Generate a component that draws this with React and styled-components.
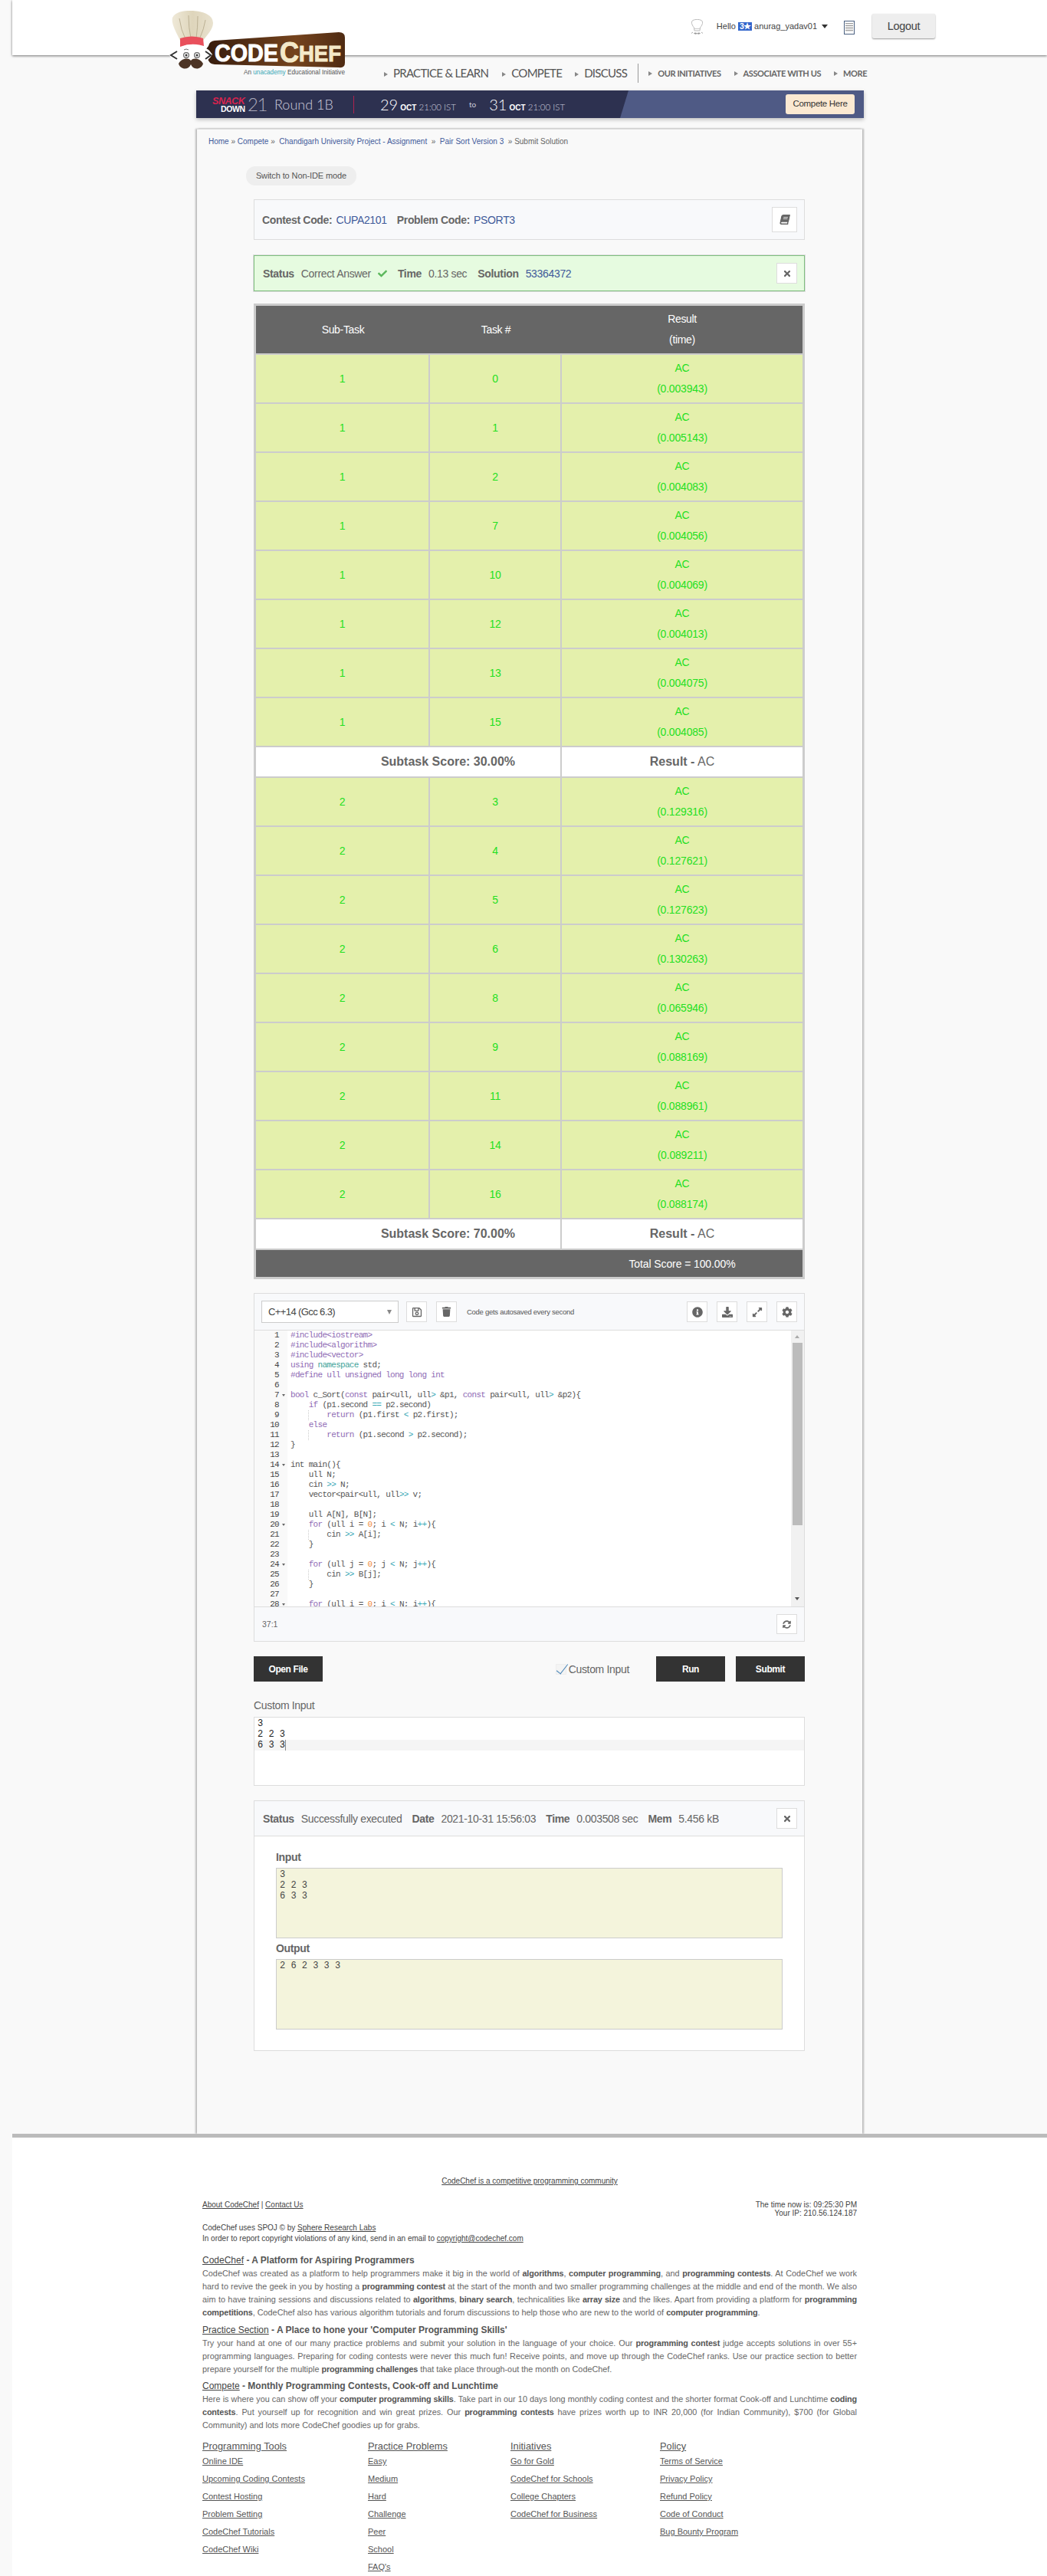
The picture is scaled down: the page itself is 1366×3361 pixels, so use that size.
import React from "react";
import styled, { createGlobalStyle } from "styled-components";
import {
  FaBook,
  FaCheck,
  FaCog,
  FaDownload,
  FaExpandAlt,
  FaInfoCircle,
  FaRegSave,
  FaSyncAlt,
  FaTimes,
  FaTrash,
} from "react-icons/fa";

const firstTasks = [
  ["0", "0.003943"],
  ["1", "0.005143"],
  ["2", "0.004083"],
  ["7", "0.004056"],
  ["10", "0.004069"],
  ["12", "0.004013"],
  ["13", "0.004075"],
  ["15", "0.004085"],
];

const secondTasks = [
  ["3", "0.129316"],
  ["4", "0.127621"],
  ["5", "0.127623"],
  ["6", "0.130263"],
  ["8", "0.065946"],
  ["9", "0.088169"],
  ["11", "0.088961"],
  ["14", "0.089211"],
  ["16", "0.088174"],
];

const codeLines = [
  "#include<iostream>",
  "#include<algorithm>",
  "#include<vector>",
  "using namespace std;",
  "#define ull unsigned long long int",
  "",
  "bool c_Sort(const pair<ull, ull> &p1, const pair<ull, ull> &p2){",
  "    if (p1.second == p2.second)",
  "        return (p1.first < p2.first);",
  "    else",
  "        return (p1.second > p2.second);",
  "}",
  "",
  "int main(){",
  "    ull N;",
  "    cin >> N;",
  "    vector<pair<ull, ull>> v;",
  "",
  "    ull A[N], B[N];",
  "    for (ull i = 0; i < N; i++){",
  "        cin >> A[i];",
  "    }",
  "",
  "    for (ull j = 0; j < N; j++){",
  "        cin >> B[j];",
  "    }",
  "",
  "    for (ull i = 0; i < N; i++){",
];

const foldLines = [7, 14, 20, 24, 28];
const guideLines = [9, 11, 21, 25];

const footerColumns = [
  {
    title: "Programming Tools",
    width: 216,
    links: ["Online IDE", "Upcoming Coding Contests", "Contest Hosting", "Problem Setting", "CodeChef Tutorials", "CodeChef Wiki"],
  },
  {
    title: "Practice Problems",
    width: 186,
    links: ["Easy", "Medium", "Hard", "Challenge", "Peer", "School", "FAQ's"],
  },
  {
    title: "Initiatives",
    width: 195,
    links: ["Go for Gold", "CodeChef for Schools", "College Chapters", "CodeChef for Business"],
  },
  {
    title: "Policy",
    width: 200,
    links: ["Terms of Service", "Privacy Policy", "Refund Policy", "Code of Conduct", "Bug Bounty Program"],
  },
];

// small regex colouring, the same idea as the editor's C++ mode
const tokenPattern = /(#include.*|#define.*|\b(?:using|bool|const|if|else|return|for)\b|\bnamespace\b|\b0\b|==|>>|<(?= )|>(?= )|\+\+)/g;

const tokenColor = (token) => {
  if (token.startsWith("#")) return "#8f6bb5";
  if (token === "namespace") return "#3fa39a";
  if (token === "0") return "#f08a3c";
  if (/^(==|>>|<|>|\+\+)$/.test(token)) return "#35a7b5";
  if (/^[a-z]+$/.test(token)) return "#8f6bb5";
  return "#555";
};

const renderCode = (line) =>
  line.split(tokenPattern).map((part, i) =>
    i % 2 === 1 ? (
      <Token key={i} $color={tokenColor(part)}>
        {part}
      </Token>
    ) : (
      part
    )
  );

export default function App() {
  return (
    <Page>
      <GlobalStyle />
      <TopBar>
        <ChefAvatar />
        <Greeting>
          Hello <StarBadge>3★</StarBadge> anurag_yadav01
        </Greeting>
        <Caret />
        <DocIcon />
        <LogoutButton>Logout</LogoutButton>
      </TopBar>
      <LogoBlock>
        <Logo />
        <Tagline>
          An <Una>unacademy</Una> Educational Initiative
        </Tagline>
      </LogoBlock>

      <NavRow>
        <MainLink $gap={18}>PRACTICE &amp; LEARN</MainLink>
        <MainLink $gap={17}>COMPETE</MainLink>
        <MainLink $gap={14}>DISCUSS</MainLink>
        <NavDivider />
        <SubLink $gap={17}>OUR INITIATIVES</SubLink>
        <SubLink $gap={17}>ASSOCIATE WITH US</SubLink>
        <SubLink $gap={0}>MORE</SubLink>
      </NavRow>

      <ContestBanner>
        <Slant />
        <SnackLogo>
          <SnackWord>SNACK</SnackWord>
          <DownWord>DOWN</DownWord>
          <YearWord>21</YearWord>
        </SnackLogo>
        <RoundName>Round 1B</RoundName>
        <BannerRule />
        <BannerDate>
          <Big>29</Big> <Month>OCT</Month> 21:00 IST
        </BannerDate>
        <BannerTo>to</BannerTo>
        <BannerDate>
          <Big>31</Big> <Month>OCT</Month> 21:00 IST
        </BannerDate>
        <CompeteHere>Compete Here</CompeteHere>
      </ContestBanner>

      <MainCard>
        <Breadcrumb>
          <a>Home</a> » <a>Compete</a> » &nbsp;<a>Chandigarh University Project - Assignment</a> &nbsp;» &nbsp;
          <a>Pair Sort Version 3</a> &nbsp;» <Current>Submit Solution</Current>
        </Breadcrumb>
        <Content>
          <SwitchMode>Switch to Non-IDE mode</SwitchMode>

          <InfoBox>
            <b>Contest Code:</b> <BlueLink>CUPA2101</BlueLink>
            <Spacer />
            <b>Problem Code:</b> <BlueLink>PSORT3</BlueLink>
            <IconButton $w={33} $h={33}>
              <SlantBook />
            </IconButton>
          </InfoBox>

          <StatusBox>
            <b>Status</b>
            <StatusValue>Correct Answer</StatusValue>
            <GreenCheck />
            <b>Time</b>
            <StatusValue>0.13 sec</StatusValue>
            <b>Solution</b>
            <BlueLink>53364372</BlueLink>
            <IconButton $w={27} $h={27}>
              <FaTimes size={12} />
            </IconButton>
          </StatusBox>

          <ScoreWrap>
            <ScoreTable>
              <colgroup>
                <col style={{ width: 227 }} />
                <col style={{ width: 172 }} />
                <col />
              </colgroup>
              <thead>
                <tr>
                  <HeadCell>Sub-Task</HeadCell>
                  <HeadCell>Task #</HeadCell>
                  <HeadCell>
                    Result
                    <br />
                    (time)
                  </HeadCell>
                </tr>
              </thead>
              <tbody>
                {firstTasks.map(([task, time]) => (
                  <TaskRow key={task} subtask="1" task={task} time={time} />
                ))}
                <tr>
                  <ScoreCell colSpan={2}>Subtask Score: 30.00%</ScoreCell>
                  <ResultCell>
                    <b>Result -</b> AC
                  </ResultCell>
                </tr>
                {secondTasks.map(([task, time]) => (
                  <TaskRow key={task} subtask="2" task={task} time={time} />
                ))}
                <tr>
                  <ScoreCell colSpan={2}>Subtask Score: 70.00%</ScoreCell>
                  <ResultCell>
                    <b>Result -</b> AC
                  </ResultCell>
                </tr>
                <tr>
                  <TotalCell colSpan={2} />
                  <TotalCell>Total Score = 100.00%</TotalCell>
                </tr>
              </tbody>
            </ScoreTable>
          </ScoreWrap>

          <EditorCard>
            <EditorToolbar>
              <LanguageSelect>
                C++14 (Gcc 6.3)
                <SelectArrow />
              </LanguageSelect>
              <IconButton $w={27} $h={27}>
                <FaRegSave size={14} />
              </IconButton>
              <IconButton $w={27} $h={27}>
                <FaTrash size={13} />
              </IconButton>
              <AutosaveNote>Code gets autosaved every second</AutosaveNote>
              <ToolGroup>
                <IconButton $w={27} $h={27}>
                  <FaInfoCircle size={14} />
                </IconButton>
                <IconButton $w={27} $h={27}>
                  <FaDownload size={14} />
                </IconButton>
                <IconButton $w={27} $h={27}>
                  <FaExpandAlt size={14} />
                </IconButton>
                <IconButton $w={27} $h={27}>
                  <FaCog size={14} />
                </IconButton>
              </ToolGroup>
            </EditorToolbar>
            <CodePane>
              <Gutter>
                {codeLines.map((_, i) => (
                  <GutterLine key={i}>
                    {i + 1}
                    {foldLines.includes(i + 1) && <FoldMark />}
                  </GutterLine>
                ))}
              </Gutter>
              <CodeArea>
                {codeLines.map((line, i) => (
                  <CodeLine key={i} $guide={guideLines.includes(i + 1)}>
                    {renderCode(line)}
                  </CodeLine>
                ))}
              </CodeArea>
              <Scrollbar>
                <ScrollUp />
                <ScrollThumb />
                <ScrollDown />
              </Scrollbar>
            </CodePane>
            <EditorFooter>
              37:1
              <IconButton $w={27} $h={26}>
                <FaSyncAlt size={11} />
              </IconButton>
            </EditorFooter>
          </EditorCard>

          <ActionRow>
            <DarkButton>Open File</DarkButton>
            <CustomCheck>
              <CheckBoxIcon />
              Custom Input
            </CustomCheck>
            <DarkButton>Run</DarkButton>
            <DarkButton>Submit</DarkButton>
          </ActionRow>

          <CustomLabel>Custom Input</CustomLabel>
          <InputEditor>
            <InputLine>3</InputLine>
            <InputLine>2 2 3</InputLine>
            <InputLine $active>
              6 3 3<Cursor />
            </InputLine>
          </InputEditor>

          <ResultCard>
            <ResultHead>
              <b>Status</b>
              <ResultValue>Successfully executed</ResultValue>
              <b>Date</b>
              <ResultValue>2021-10-31 15:56:03</ResultValue>
              <b>Time</b>
              <ResultValue>0.003508 sec</ResultValue>
              <b>Mem</b>
              <ResultValue>5.456 kB</ResultValue>
              <IconButton $w={27} $h={27}>
                <FaTimes size={12} />
              </IconButton>
            </ResultHead>
            <ResultBody>
              <OutputLabel>Input</OutputLabel>
              <OutputBox>{"3\n2 2 3\n6 3 3"}</OutputBox>
              <OutputLabel $top={5}>Output</OutputLabel>
              <OutputBox>2 6 2 3 3 3</OutputBox>
            </ResultBody>
          </ResultCard>
        </Content>
      </MainCard>

      <Footer>
        <Community>CodeChef is a competitive programming community</Community>
        <FooterMeta>
          <div>
            <u>About CodeChef</u> | <u>Contact Us</u>
          </div>
          <ServerInfo>
            The time now is: 09:25:30 PM
            <br />
            Your IP: 210.56.124.187
          </ServerInfo>
        </FooterMeta>
        <Legal>
          CodeChef uses SPOJ © by <u>Sphere Research Labs</u>
          <br />
          In order to report copyright violations of any kind, send in an email to <u>copyright@codechef.com</u>
        </Legal>

        <BlurbTitle $top={13}>
          <u>CodeChef</u> - A Platform for Aspiring Programmers
        </BlurbTitle>
        <Blurb>
          CodeChef was created as a platform to help programmers make it big in the world of <b>algorithms</b>,{" "}
          <b>computer programming</b>, and <b>programming contests</b>. At CodeChef we work hard to revive the geek in
          you by hosting a <b>programming contest</b> at the start of the month and two smaller programming challenges
          at the middle and end of the month. We also aim to have training sessions and discussions related to{" "}
          <b>algorithms</b>, <b>binary search</b>, technicalities like <b>array size</b> and the likes. Apart from
          providing a platform for <b>programming competitions</b>, CodeChef also has various algorithm tutorials and
          forum discussions to help those who are new to the world of <b>computer programming</b>.
        </Blurb>

        <BlurbTitle $top={6}>
          <u>Practice Section</u> - A Place to hone your 'Computer Programming Skills'
        </BlurbTitle>
        <Blurb>
          Try your hand at one of our many practice problems and submit your solution in the language of your choice.
          Our <b>programming contest</b> judge accepts solutions in over 55+ programming languages. Preparing for coding
          contests were never this much fun! Receive points, and move up through the CodeChef ranks. Use our practice
          section to better prepare yourself for the multiple <b>programming challenges</b> that take place through-out
          the month on CodeChef.
        </Blurb>

        <BlurbTitle $top={5}>
          <u>Compete</u> - Monthly Programming Contests, Cook-off and Lunchtime
        </BlurbTitle>
        <Blurb>
          Here is where you can show off your <b>computer programming skills</b>. Take part in our 10 days long monthly
          coding contest and the shorter format Cook-off and Lunchtime <b>coding contests</b>. Put yourself up for
          recognition and win great prizes. Our <b>programming contests</b> have prizes worth up to INR 20,000 (for
          Indian Community), $700 (for Global Community) and lots more CodeChef goodies up for grabs.
        </Blurb>

        <LinkColumns>
          {footerColumns.map((column) => (
            <LinkColumn key={column.title} $width={column.width}>
              <ColumnTitle>{column.title}</ColumnTitle>
              {column.links.map((link) => (
                <FooterLink key={link}>{link}</FooterLink>
              ))}
            </LinkColumn>
          ))}
        </LinkColumns>
      </Footer>
    </Page>
  );
}

function TaskRow({ subtask, task, time }) {
  return (
    <tr>
      <TaskCell>{subtask}</TaskCell>
      <TaskCell>{task}</TaskCell>
      <TaskCell>
        AC
        <br />({time})
      </TaskCell>
    </tr>
  );
}

function ChefAvatar() {
  return (
    <AvatarSvg width="17" height="21" viewBox="0 0 17 21">
      <path
        d="M4.5 11 C1 7 0.5 3 3 1.5 C6 0 11 0 14 1.5 C16.5 3 16 7 12.5 11 L12 15 L5 15 Z"
        fill="#fff"
        stroke="#bbb"
      />
      <path d="M5 12.5 L12 12.5" stroke="#ccc" />
      <path d="M3 17 L1 18.5 M14 17 L16 18.5" stroke="#aaa" />
      <path d="M4 18.5 Q6 16.5 8.5 18.5 Q11 16.5 13 18.5 Q11 20.5 8.5 19 Q6 20.5 4 18.5 Z" fill="#999" />
    </AvatarSvg>
  );
}

function Logo() {
  return (
    <svg width="232" height="78" viewBox="0 0 232 78">
      <defs>
        <linearGradient id="logoBrown" x1="0" x2="1" y1="0" y2="0">
          <stop offset="0" stopColor="#351b0d" />
          <stop offset="0.65" stopColor="#74431d" />
          <stop offset="1" stopColor="#4f2b13" />
        </linearGradient>
        <linearGradient id="logoHat" x1="0" x2="1" y1="0" y2="0">
          <stop offset="0" stopColor="#efe9d8" />
          <stop offset="0.5" stopColor="#ded5bb" />
          <stop offset="1" stopColor="#e9e2cf" />
        </linearGradient>
      </defs>
      <path
        d="M52 46 Q53 40 60 39 L222 28 Q230 28 230 35 L230 68 Q230 75 222 74 L60 70 Q52 69 51 62 L46 54 Z"
        fill="url(#logoBrown)"
      />
      <LogoWord x="60" y="66" fontSize="31" fill="#fff" stroke="#fff" textLength="83" lengthAdjust="spacingAndGlyphs">
        CODE
      </LogoWord>
      <LogoWord x="145" y="67" fontSize="37" fill="#f4e9c9" stroke="#f4e9c9" textLength="25" lengthAdjust="spacingAndGlyphs">
        C
      </LogoWord>
      <LogoWord x="170" y="66" fontSize="30" fill="#f4e9c9" stroke="#f4e9c9" textLength="55" lengthAdjust="spacingAndGlyphs">
        HEF
      </LogoWord>
      <path d="M15 39 C10 28 3 17 5 9 C9 1 20 0 28 0 C42 0 58 4 58 16 C58 24 50 32 45 39 Z" fill="url(#logoHat)" />
      <path d="M14 10 Q16 25 22 37 M26 6 Q26 22 29 36 M38 7 Q38 22 36 36 M48 12 Q46 24 41 35" stroke="#bcb194" fill="none" />
      <path d="M15 36 Q30 31 45 36 L46 46 Q30 41 15 47 Z" fill="#e9505c" />
      <path d="M17 47 Q30 41 44 47 Q52 49 57 57 Q52 66 44 67 Q30 80 15 67 Q5 66 0 57 Q6 49 17 47 Z" fill="#fff" />
      <circle cx="23" cy="58" r="3.4" fill="#fff" stroke="#666" strokeWidth="1.2" />
      <circle cx="23" cy="58" r="1.5" fill="#333" />
      <circle cx="37" cy="58" r="3.4" fill="#fff" stroke="#666" strokeWidth="1.2" />
      <circle cx="37" cy="58" r="1.5" fill="#333" />
      <path d="M20 51 Q23 49 26 51" stroke="#777" fill="none" />
      <path
        d="M29 65 C25 60 16 63 13 69 C15 77 26 78 29 70 C32 78 43 77 45 69 C42 63 33 60 29 65 Z"
        fill="#4c3425"
      />
      <path d="M11 53 L3 58 L11 63 M48 53 L55 58 L48 63" stroke="#333" strokeWidth="2" fill="none" />
    </svg>
  );
}

const GlobalStyle = createGlobalStyle`
  html, body {
    margin: 0;
    padding: 0;
    background: #f9f9f9;
    font-family: "Liberation Sans", Arial, sans-serif;
    color: #666;
  }
`;

const Page = styled.div`
  position: relative;
  width: 1366px;
  height: 3361px;
  overflow: hidden;
`;

const TopBar = styled.header`
  margin-left: 16px;
  height: 72px;
  padding-right: 146px;
  box-sizing: border-box;
  display: flex;
  align-items: center;
  justify-content: flex-end;
  background: #fff;
  box-shadow: 0 1px 3px rgba(0, 0, 0, 0.55);
`;

const AvatarSvg = styled.svg`
  margin: -2px 17px 0 0;
`;

const Greeting = styled.span`
  margin-top: -4px;
  font-size: 11px;
  white-space: nowrap;
  color: #444;
`;

const StarBadge = styled.span`
  display: inline-block;
  width: 18px;
  height: 11px;
  background: #3366cc;
  font-size: 10.5px;
  line-height: 11px;
  font-weight: 700;
  text-align: center;
  letter-spacing: -1px;
  color: #fff;
`;

const Caret = styled.span`
  margin: -4px 0 0 6px;
  border-left: 4px solid transparent;
  border-right: 4px solid transparent;
  border-top: 5px solid #333;
`;

const DocIcon = styled.span`
  width: 14px;
  height: 18px;
  margin: -1px 0 0 21px;
  box-sizing: border-box;
  border: 1px solid #4a6080;
  background: repeating-linear-gradient(#999 0 1px, #eee 1px 3px) content-box;
  padding: 2px 1px;
`;

const LogoutButton = styled.button`
  width: 82px;
  height: 32px;
  margin: -4px 0 0 23px;
  border: 0;
  border-radius: 2px;
  background: #eee;
  box-shadow: 0 1px 2px rgba(0, 0, 0, 0.4);
  font: 14.5px "Liberation Sans", sans-serif;
  letter-spacing: -0.3px;
  color: #444;
`;

const LogoBlock = styled.div`
  position: absolute;
  left: 220px;
  top: 14px;
  width: 232px;
  height: 90px;
`;

const LogoWord = styled.text`
  font-family: "Liberation Sans", sans-serif;
  font-weight: 700;
  stroke-width: 1px;
`;

const Tagline = styled.div`
  position: absolute;
  left: 98px;
  top: 76px;
  white-space: nowrap;
  font-size: 8.2px;
  line-height: 10px;
  color: #555;
`;

const Una = styled.span`
  color: #3aa7b5;
`;

const NavRow = styled.nav`
  height: 46px;
  padding-left: 501px;
  display: flex;
  align-items: center;
`;

const arrow = `
  &::before {
    content: "";
    display: inline-block;
    margin-right: 7px;
    border-left: 5px solid #888;
    border-top: 3px solid transparent;
    border-bottom: 3px solid transparent;
    vertical-align: 1px;
  }
`;

const MainLink = styled.a`
  ${arrow}
  margin-right: ${(p) => p.$gap}px;
  font: 15px Lato, sans-serif;
  letter-spacing: -0.72px;
  color: #555;
  white-space: nowrap;
`;

const SubLink = styled.a`
  ${arrow}
  margin-right: ${(p) => p.$gap}px;
  font: 700 11px Lato, sans-serif;
  letter-spacing: -0.4px;
  color: #666;
  white-space: nowrap;
`;

const NavDivider = styled.span`
  width: 1px;
  height: 25px;
  margin-right: 13px;
  background: #999;
`;

const ContestBanner = styled.section`
  position: relative;
  margin-left: 256px;
  width: 871px;
  height: 36px;
  padding-left: 21px;
  box-sizing: border-box;
  display: flex;
  align-items: center;
  background: #2d3150;
  box-shadow: 0 2px 5px rgba(0, 0, 0, 0.25);
  color: #ccd;
`;

const Slant = styled.div`
  position: absolute;
  inset: 0;
  background: #4f5a85;
  clip-path: polygon(564px 0, 100% 0, 100% 100%, 553px 100%);
`;

const SnackLogo = styled.div`
  position: relative;
  width: 64px;
  height: 24px;
`;

const SnackWord = styled.span`
  position: absolute;
  left: 0;
  top: 2px;
  font-size: 12.6px;
  line-height: 12px;
  font-weight: 700;
  font-style: italic;
  letter-spacing: -0.5px;
  color: #d8234e;
`;

const DownWord = styled.span`
  position: absolute;
  left: 11px;
  top: 13px;
  font-size: 10.5px;
  line-height: 10px;
  font-weight: 700;
  letter-spacing: -0.4px;
  color: #fff;
`;

const YearWord = styled.span`
  position: absolute;
  left: 46px;
  top: 0;
  font: 300 24px/24px Lato, sans-serif;
  letter-spacing: -1.5px;
  color: #aab;
`;

const RoundName = styled.span`
  position: relative;
  margin-left: 17px;
  width: 103px;
  font: 300 18px Lato, sans-serif;
`;

const BannerRule = styled.span`
  position: relative;
  width: 1px;
  height: 23px;
  margin-right: 34px;
  background: #b0234e;
`;

const BannerDate = styled.span`
  position: relative;
  white-space: nowrap;
  font: 300 11.5px Lato, sans-serif;
`;

const Big = styled.span`
  font-size: 20px;
  color: #fff;
`;

const Month = styled.b`
  font: 700 10px "Liberation Sans", sans-serif;
  color: #fff;
`;

const BannerTo = styled.span`
  position: relative;
  margin: 0 17px;
  font: 400 10px Lato, sans-serif;
`;

const CompeteHere = styled.a`
  position: absolute;
  left: 769px;
  top: 5px;
  width: 90px;
  height: 26px;
  border-radius: 3px;
  background: #fbe9d2;
  font-size: 11.5px;
  line-height: 25px;
  letter-spacing: -0.3px;
  text-align: center;
  color: #333;
`;

const MainCard = styled.main`
  margin: 14px 0 0 257px;
  width: 868px;
  height: 2616px;
  box-sizing: border-box;
  background: #f9f9f9;
  border-top: 1px solid #ddd;
  box-shadow: 2px 0 2px rgba(0, 0, 0, 0.25), -2px 0 2px rgba(0, 0, 0, 0.25);
`;

const Breadcrumb = styled.div`
  padding: 9px 0 0 15px;
  font-size: 10px;
  line-height: 13px;
  color: #666;

  a {
    color: #3f5a9a;
  }
`;

const Current = styled.span`
  color: #666;
`;

const Content = styled.div`
  margin: 0 0 0 74px;
  width: 719px;
  font-size: 14px;
  letter-spacing: -0.33px;
`;

const SwitchMode = styled.div`
  margin: 26px 0 0 -10px;
  width: 144px;
  height: 25px;
  border-radius: 12px;
  background: #eee;
  font-size: 11px;
  line-height: 25px;
  letter-spacing: -0.1px;
  text-align: center;
  color: #555;
`;

const IconButton = styled.span`
  flex: none;
  width: ${(p) => p.$w}px;
  height: ${(p) => p.$h}px;
  box-sizing: border-box;
  display: flex;
  align-items: center;
  justify-content: center;
  background: #fff;
  border: 1px solid #ddd;
  color: #666;
`;

const InfoBox = styled.div`
  margin-top: 18px;
  height: 53px;
  padding: 0 9px 0 10px;
  box-sizing: border-box;
  display: flex;
  align-items: center;
  gap: 5px;
  border: 1px solid #ddd;
  background: #f8f9fb;

  ${IconButton} {
    margin-left: auto;
  }
`;

const Spacer = styled.span`
  width: 3px;
`;

const BlueLink = styled.a`
  color: #3f5a9a;
`;

const SlantBook = styled(FaBook)`
  width: 12px;
  height: 13px;
  transform: skewX(-12deg);
`;

const StatusBox = styled.div`
  margin-top: 20px;
  height: 47px;
  padding: 0 9px 0 11px;
  box-sizing: border-box;
  display: flex;
  align-items: center;
  gap: 9px;
  border: 1px solid #7fbf7f;
  outline: 1px solid #ddd;
  background: #e6fbe0;

  ${IconButton} {
    margin-left: auto;
  }
`;

const StatusValue = styled.span`
  margin-right: 5px;
`;

const GreenCheck = styled(FaCheck)`
  width: 12px;
  height: 12px;
  margin: 0 5px 0 -5px;
  color: #5cb85c;
`;

const ScoreWrap = styled.div`
  margin-top: 16px;
  border: 3px solid #ccc;
`;

const ScoreTable = styled.table`
  width: 100%;
  table-layout: fixed;
  border-collapse: separate;
  border-spacing: 0;
`;

const HeadCell = styled.th`
  height: 64px;
  padding: 0;
  box-sizing: border-box;
  border-bottom: 2px solid #ccc;
  background: #666;
  font-size: 14px;
  font-weight: 400;
  line-height: 27px;
  letter-spacing: -0.33px;
  color: #fff;
`;

const TaskCell = styled.td`
  height: 64px;
  padding: 0;
  box-sizing: border-box;
  border-bottom: 2px solid #ccc;
  border-right: 2px solid #ccc;
  background: #e4f0ac;
  font-size: 14px;
  line-height: 27px;
  letter-spacing: -0.2px;
  text-align: center;
  color: #1fe01f;

  &:last-child {
    border-right: 0;
  }
`;

const ScoreCell = styled.td`
  height: 40px;
  padding: 0 0 0 104px;
  box-sizing: border-box;
  border-bottom: 2px solid #ccc;
  border-right: 2px solid #ccc;
  background: #fff;
  font-size: 16px;
  font-weight: 700;
  letter-spacing: 0;
  text-align: center;
  color: #666;
`;

const ResultCell = styled.td`
  height: 40px;
  padding: 0;
  box-sizing: border-box;
  border-bottom: 2px solid #ccc;
  background: #fff;
  font-size: 16px;
  letter-spacing: 0;
  text-align: center;
  color: #666;
`;

const TotalCell = styled.td`
  height: 35px;
  padding: 0;
  background: #666;
  font-size: 14px;
  letter-spacing: -0.1px;
  text-align: center;
  color: #fff;
`;

const EditorCard = styled.section`
  margin-top: 18px;
  border: 1px solid #ddd;
  background: #f8f9fb;
`;

const EditorToolbar = styled.div`
  height: 48px;
  padding: 0 9px;
  box-sizing: border-box;
  display: flex;
  align-items: center;
  border-bottom: 1px solid #ddd;

  ${IconButton} {
    margin-left: 12px;
  }
`;

const LanguageSelect = styled.div`
  position: relative;
  width: 179px;
  height: 29px;
  padding-left: 8px;
  margin-right: -2px;
  box-sizing: border-box;
  border: 1px solid #ccc;
  background: #fff;
  font-size: 13px;
  line-height: 27px;
  letter-spacing: -0.6px;
  color: #444;
`;

const SelectArrow = styled.span`
  position: absolute;
  right: 8px;
  top: 11px;
  border-left: 3px solid transparent;
  border-right: 3px solid transparent;
  border-top: 6px solid #888;
`;

const AutosaveNote = styled.span`
  margin-left: 13px;
  font-size: 9.5px;
  letter-spacing: -0.28px;
  color: #555;
`;

const ToolGroup = styled.div`
  margin-left: auto;
  display: flex;
`;

const CodePane = styled.div`
  position: relative;
  height: 360px;
  display: flex;
  overflow: hidden;
  background: #fff;
  font: 11px/13px "Liberation Mono", monospace;
  letter-spacing: -0.69px;
`;

const Gutter = styled.div`
  flex: none;
  width: 43px;
  background: #f9f9f9;
  color: #444;
`;

const GutterLine = styled.div`
  position: relative;
  height: 13px;
  padding-right: 11px;
  text-align: right;
`;

const FoldMark = styled.span`
  position: absolute;
  right: 3px;
  top: 5px;
  border-left: 2.5px solid transparent;
  border-right: 2.5px solid transparent;
  border-top: 3px solid #666;
`;

const CodeArea = styled.div`
  flex: 1;
  padding-left: 4px;
  color: #555;
`;

const CodeLine = styled.div`
  position: relative;
  height: 13px;
  white-space: pre;

  ${(p) =>
    p.$guide &&
    `&::before {
      content: "";
      position: absolute;
      left: 23px;
      top: 0;
      bottom: 0;
      border-left: 1px dotted #ccc;
    }`}
`;

const Token = styled.span`
  color: ${(p) => p.$color};
`;

const Scrollbar = styled.div`
  flex: none;
  position: relative;
  width: 17px;
  background: #f1f1f1;
`;

const ScrollThumb = styled.div`
  position: absolute;
  left: 2px;
  top: 16px;
  width: 13px;
  height: 238px;
  background: #bcbcbc;
`;

const ScrollUp = styled.span`
  position: absolute;
  left: 5px;
  top: 6px;
  border-left: 3.5px solid transparent;
  border-right: 3.5px solid transparent;
  border-bottom: 4px solid #aaa;
`;

const ScrollDown = styled.span`
  position: absolute;
  left: 5px;
  bottom: 8px;
  border-left: 3.5px solid transparent;
  border-right: 3.5px solid transparent;
  border-top: 4px solid #555;
`;

const EditorFooter = styled.div`
  height: 45px;
  padding: 0 9px 0 10px;
  box-sizing: border-box;
  display: flex;
  align-items: center;
  justify-content: space-between;
  border-top: 1px solid #ddd;
  font-size: 10.5px;
  letter-spacing: 0;
`;

const ActionRow = styled.div`
  margin-top: 19px;
  display: flex;
  align-items: center;

  > :first-child {
    margin-right: auto;
  }

  > :last-child {
    margin-left: 14px;
  }
`;

const DarkButton = styled.button`
  width: 90px;
  height: 33px;
  padding: 0;
  border: 0;
  background: #333;
  font: 700 12px "Liberation Sans", sans-serif;
  letter-spacing: -0.4px;
  color: #fff;
`;

const CustomCheck = styled.label`
  display: flex;
  align-items: center;
  gap: 3px;
  margin-right: 35px;
  color: #666;
`;

const CheckBoxIcon = styled.span`
  position: relative;
  width: 12px;
  height: 12px;
  background: #f4f4f4;
  border: 1px solid #eee;

  &::after {
    content: "";
    position: absolute;
    left: 4px;
    top: -4px;
    width: 6px;
    height: 15px;
    border-right: 1px solid #4a86b8;
    border-bottom: 1px solid #4a86b8;
    transform: rotate(38deg);
  }
`;

const CustomLabel = styled.div`
  margin-top: 23px;
  line-height: 16px;
  color: #666;
`;

const InputEditor = styled.div`
  margin-top: 7px;
  height: 90px;
  padding-top: 1px;
  box-sizing: border-box;
  border: 1px solid #ddd;
  background: #fff;
`;

const InputLine = styled.div`
  height: 14px;
  padding-left: 4px;
  font: 12px/14px "Liberation Mono", monospace;
  letter-spacing: 0;
  color: #222;
  background: ${(p) => (p.$active ? "#f5f5f5" : "transparent")};
`;

const Cursor = styled.span`
  display: inline-block;
  width: 1px;
  height: 14px;
  vertical-align: top;
  background: #888;
`;

const ResultCard = styled.section`
  margin-top: 19px;
  border: 1px solid #ddd;
  background: #fff;
`;

const ResultHead = styled.div`
  height: 46px;
  padding: 0 9px 0 11px;
  box-sizing: border-box;
  display: flex;
  align-items: center;
  gap: 9px;
  border-bottom: 1px solid #ddd;
  background: #f8f9fb;

  ${IconButton} {
    margin-left: auto;
  }
`;

const ResultValue = styled.span`
  margin-right: 4px;
`;

const ResultBody = styled.div`
  padding: 19px 28px 27px;
`;

const OutputLabel = styled.div`
  margin-top: ${(p) => p.$top || 0}px;
  line-height: 16px;
  font-weight: 700;
  color: #666;
`;

const OutputBox = styled.pre`
  margin: 6px 0 0;
  height: 92px;
  padding: 1px 4px;
  box-sizing: border-box;
  border: 1px solid #ccc;
  background: #f4f4dc;
  font: 12px/14px "Liberation Mono", monospace;
  letter-spacing: 0;
  color: #444;
`;

const Footer = styled.footer`
  margin-left: 16px;
  height: 577px;
  padding: 50px 0 0 248px;
  box-sizing: border-box;
  background: #fff;
  border-top: 5px solid #bbb;
  font-size: 10px;
  color: #444;
`;

const Community = styled.div`
  width: 854px;
  text-align: center;
  text-decoration: underline;
  line-height: 14px;
`;

const FooterMeta = styled.div`
  margin-top: 18px;
  width: 854px;
  display: flex;
  justify-content: space-between;
  line-height: 11px;
`;

const ServerInfo = styled.div`
  text-align: right;
`;

const Legal = styled.div`
  margin-top: 7px;
  line-height: 14px;
`;

const BlurbTitle = styled.h3`
  margin: ${(p) => p.$top}px 0 0;
  width: 854px;
  font-size: 12px;
  line-height: 17px;
  color: #555;
  font-weight: 700;

  u {
    font-weight: 400;
    color: #444;
  }
`;

const Blurb = styled.p`
  margin: 0;
  width: 854px;
  font-size: 10.85px;
  line-height: 17px;
  text-align: justify;
  color: #666;

  b {
    color: #555;
    letter-spacing: -0.15px;
  }
`;

const LinkColumns = styled.div`
  margin-top: 12px;
  display: flex;
`;

const LinkColumn = styled.div`
  width: ${(p) => p.$width}px;
`;

const ColumnTitle = styled.div`
  font-size: 12.8px;
  line-height: 14px;
  text-decoration: underline;
  color: #555;
`;

const FooterLink = styled.a`
  display: block;
  margin-top: 5px;
  height: 18px;
  font-size: 11px;
  line-height: 14px;
  text-decoration: underline;
  color: #555;
`;
